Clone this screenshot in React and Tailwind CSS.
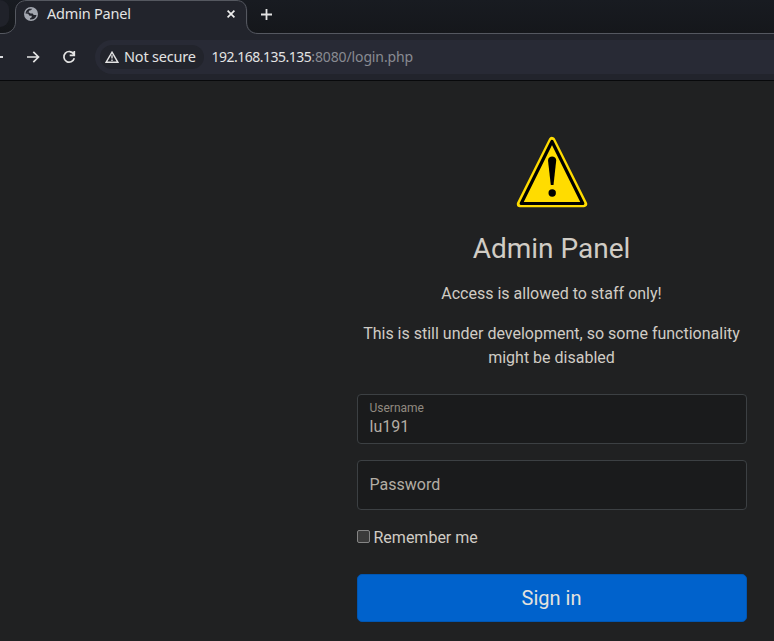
import React from "react";

function TabShape() {
  return (
    <svg className="absolute left-0 top-0" width="263" height="34" fill="none">
      <path d="M0 34V33.5H3C10 33.5 15.5 29 15.5 22V11C15.5 4.500 20 .5 27 .5H236C243 .5 247.500 4.500 247.500 11V22C247.500 29 252 33.500 259 33.500H263V34Z" fill="#22242c" />
      <path d="M0 33.500H3C10 33.500 15.500 29 15.500 22V11C15.500 4.500 20 .5 27 .5H236C243 .5 246.500 4.500 246.500 11V22C246.500 29 251 33.500 258 33.500H263" stroke="#555860" />
    </svg>
  );
}

function Globe() {
  return (
    <svg width="14" height="14" viewBox="0 0 14 14" className="shrink-0">
      <circle cx="7" cy="7" r="7" fill="#a3a7b0" />
      <path d="M8.300 1.700L6.800 3.300L5 3.800V5.500L6.500 6.400H8.700L9.700 8H12.500C12.200 10 10.800 11.700 8.700 12.300L6 12.500V11.400L7.700 10.300V8.700H5.500L4.300 7L1.500 6.500C1.700 4.500 3.200 2.500 5 1.800Z" fill="#22242c" />
      <path d="M7.800 1.500L6.800 3.300L5 3.800V5.500L4 6.700L1.500 6.500" fill="#a3a7b0" opacity=".25" />
    </svg>
  );
}

function BrowserChrome() {
  return (
    <header className="flex h-[81px] flex-col border-b border-[#08090b] bg-[#22242c] font-['Noto_Sans',sans-serif] text-[#e3e3e3]">
      <div className="relative flex h-[34px] border-b border-[#555860] bg-linear-to-b from-[#181b21] to-[#15171b]">
        <div className="h-[27px] w-[9px] rounded-r-[9px] bg-[#20222a]" />
        <TabShape />
        <div className="relative ml-[15px] flex h-[28px] w-[223px] items-center">
          <Globe />
          <span className="mb-[2px] ml-[9px] flex-1 whitespace-nowrap text-[14.500px] leading-5 tracking-[-0.2px]">Admin Panel</span>
          <svg width="8" height="8" viewBox="0 0 8 8" className="mr-[12px]" stroke="#eeeeee" strokeWidth="1.700">
            <path d="M.6 .6L7.400 7.400M7.400 .6L.6 7.400" />
          </svg>
        </div>
        <svg width="11" height="11" viewBox="0 0 11 11" className="ml-[14px] mt-[9px]" stroke="#e3e3e3" strokeWidth="1.800">
          <path d="M5.500 0V11M0 5.500H11" />
        </svg>
      </div>
      <div className="flex h-[46px] items-center">
        <div className="h-[2px] w-[3px] bg-[#d8d9dc]" />
        <svg width="13" height="12" viewBox="0 0 13 12" className="ml-[24px]" fill="none" stroke="#e3e3e3" strokeWidth="1.700">
          <path d="M0 6H11.300M6.300 .8L11.500 6L6.300 11.200" />
        </svg>
        <svg width="14" height="14" viewBox="0 0 14 14" className="ml-[22px]" fill="none" stroke="#e3e3e3" strokeWidth="1.700">
          <path d="M11.700 4A5.300 5.300 0 1 0 12.300 8.300M12.300 1V5.300H7.700" />
        </svg>
        <div className="ml-[19px] flex h-[34px] flex-1 items-center rounded-l-[17px] bg-[#282a35] pl-[5px]">
          <div className="flex h-[24px] w-[104px] items-center rounded-full bg-[#22242c] pl-[5px]">
            <svg width="14" height="12" viewBox="0 0 14 12" className="shrink-0" fill="none" stroke="#e3e3e3" strokeWidth="1.400">
              <path d="M7 1.200L12.900 11.300H1.100ZM7 4.300V7.600M7 8.500V9.900" />
            </svg>
            <span className="mb-[2px] ml-[5px] whitespace-nowrap text-[14.500px] leading-5 tracking-[-0.2px]">Not secure</span>
          </div>
          <span className="ml-[7.500px] whitespace-nowrap text-[14px] leading-5 tracking-[-0.5px]">
            192.168.135.135<span className="tracking-[-0.13px] text-[#898b92]">:8080/login.php</span>
          </span>
        </div>
      </div>
    </header>
  );
}

function WarningSign() {
  return (
    <svg width="72" height="72" viewBox="0 0 72 72">
      <path d="M36 4L68 68H4Z" fill="#ffdc00" stroke="#ffdc00" strokeWidth="6.400" strokeLinejoin="round" />
      <path d="M36 5.500L66.800 67.500H5.200Z" fill="#ffdc00" stroke="#000" strokeWidth="3.200" strokeLinejoin="round" />
      <path d="M32 24.500C32 19 40.300 19 40.200 24.500L37.500 49H34.800Z" fill="#000" />
      <circle cx="36.200" cy="57" r="3.700" fill="#000" />
    </svg>
  );
}

export default function App() {
  return (
    <div className="h-[641px] w-[774px] overflow-hidden bg-[#202122]">
      <BrowserChrome />
      <main className="ml-[356.500px] flex w-[390px] flex-col items-center pt-[55px] font-['Roboto',sans-serif] text-base text-[#d0ccc5]">
        <WarningSign />
        <h1 className="mt-[24px] text-[28px] leading-[34px]">Admin Panel</h1>
        <p className="mt-4 leading-6">Access is allowed to staff only!</p>
        <p className="mt-4 text-center leading-6">This is still under development, so some functionality might be disabled</p>
        <label className="mt-[24px] flex h-[50px] w-full flex-col rounded border border-[#3c4043] bg-[#1a1b1c] px-[12px] pt-[5px]">
          <span className="text-[12px] leading-4 text-[#918a80]">Username</span>
          <input className="mt-px h-[20px] w-full bg-transparent leading-5 text-[#b3ada4] outline-none" defaultValue="lu191" />
        </label>
        <input type="password" placeholder="Password" className="mt-4 h-[50px] w-full rounded border border-[#3c4043] bg-[#1a1b1c] px-[12px] pb-[2px] placeholder:text-[#b3ada4]" />
        <label className="mt-4 flex h-6 w-full items-center">
          <input type="checkbox" className="mr-[4px] mb-[3px] size-[13px] appearance-none rounded-[2px] border border-[#858585] bg-[#3b3b3b]" />
          Remember me
        </label>
        <button className="mt-6 h-[48px] w-full rounded-[5px] border border-[#0056b3] bg-[#0062cc] text-[20px] leading-[30px] text-[#e4e2de]">Sign in</button>
      </main>
    </div>
  );
}
